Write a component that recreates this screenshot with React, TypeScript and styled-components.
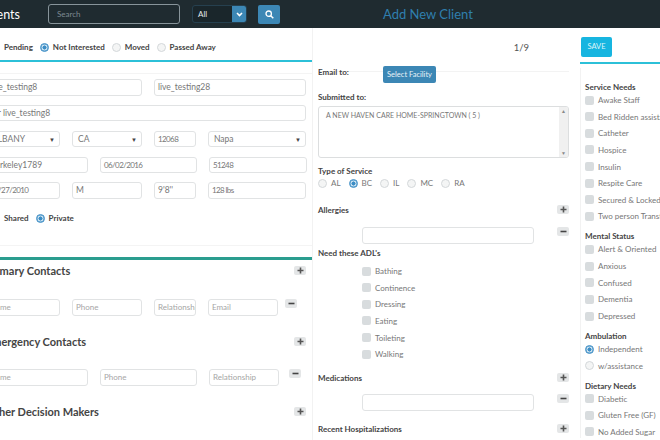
import React from 'react';
import styled, { createGlobalStyle } from 'styled-components';

const GlobalStyle = createGlobalStyle`
	html, body {
		margin: 0;
		padding: 0;
		width: 660px;
		height: 440px;
		overflow: hidden;
		background: #fff;
		font-family: 'Lato', 'Noto Sans', sans-serif;
	}
	* { box-sizing: border-box; }
`;

const Page = styled.div`
	width: 660px;
	height: 440px;
	overflow: hidden;
`;

const Header = styled.header`
	height: 28px;
	background: #1f2b30;
	display: flex;
	align-items: center;
`;

const BrandClip = styled.div`
	width: 48px;
	padding-right: 28px;
	overflow: hidden;
	display: flex;
	justify-content: flex-end;
`;

const Brand = styled.div`
	flex: none;
	color: #fff;
	font-size: 12.5px;
	white-space: nowrap;
`;

const SearchInput = styled.div`
	width: 132px;
	height: 20px;
	border: 1px solid #87949a;
	border-radius: 3px;
	color: #7d8a90;
	font-size: 8px;
	line-height: 18px;
	padding-left: 8px;
`;

const FilterSelect = styled.div`
	width: 55px;
	height: 18px;
	margin-left: 12px;
	border: 1px solid #26404f;
	border-radius: 3px;
	background: #1a262b;
	color: #e6eaec;
	font-size: 8px;
	line-height: 16px;
	padding-left: 5px;
	display: flex;
	justify-content: space-between;
	overflow: hidden;
`;

const FilterArrow = styled.span`
	width: 14px;
	background: #3c87b5;
	display: flex;
	align-items: center;
	justify-content: center;
`;

const SearchButton = styled.div`
	width: 22px;
	height: 19px;
	margin-left: 11px;
	background: #3c87b5;
	border-radius: 2px;
	display: flex;
	align-items: center;
	justify-content: center;
`;

const Title = styled.div`
	margin-left: 103px;
	color: #2f7fae;
	font-size: 13px;
	white-space: nowrap;
`;

const Columns = styled.main`
	display: flex;
	height: 412px;
`;

const LeftColumn = styled.section`
	flex: none;
	width: 336px;
	margin-left: -24px;
	padding-top: 14px;
`;

const MiddleColumn = styled.section`
	flex: none;
	width: 268px;
	padding: 15px 11px 0 5px;
	border-left: 1px solid #f2f2f2;
`;

const RightColumn = styled.section`
	flex: none;
	width: 120px;
	padding-top: 9px;
`;

const RadioRow = styled.div<{ $top?: number; $left?: number }>`
	display: flex;
	align-items: center;
	gap: 4px;
	height: 10px;
	margin-top: ${p => p.$top ?? 0}px;
	padding-left: ${p => p.$left ?? 0}px;
	font-size: 8px;
	font-weight: 700;
	color: #444;
	white-space: nowrap;
`;

const RadioLabel = styled.span<{ $plain?: boolean }>`
	margin-right: 3px;
	${p => (p.$plain ? 'font-weight: 400; color: #777; margin-right: 4px;' : '')}
`;

const Radio = styled.span<{ $checked?: boolean }>`
	flex: none;
	width: 9px;
	height: 9px;
	border-radius: 50%;
	border: 1px solid ${p => (p.$checked ? '#3c8dc5' : '#d4d8da')};
	background: ${p => (p.$checked ? 'radial-gradient(circle, #3c8dc5 0 1.8px, #dcecf6 2.3px)' : '#f4f5f5')};
	box-shadow: ${p => (p.$checked ? 'inset 0 0 0 0.5px #3c8dc5' : 'none')};
`;

const Rule = styled.div<{ $color: string; $h?: number; $top?: number }>`
	height: ${p => p.$h ?? 2}px;
	margin-top: ${p => p.$top ?? 0}px;
	background: ${p => p.$color};
`;

const FieldRow = styled.div<{ $top?: number }>`
	display: flex;
	gap: 12px;
	margin-top: ${p => p.$top ?? 0}px;
	padding-left: 10px;
	align-items: flex-start;
`;

const Field = styled.div<{ $w: number; $h?: number; $hint?: boolean; $select?: boolean; $num?: boolean }>`
	flex: none;
	width: ${p => p.$w}px;
	height: ${p => p.$h ?? 17}px;
	border: 1px solid #e1e3e4;
	border-radius: 3px;
	background: #fff;
	padding: 0 ${p => (p.$select ? 2 : 3)}px 0 ${p => (p.$select ? 5 : 3)}px;
	color: ${p => (p.$hint ? '#a6a6a6' : '#777')};
	font-size: ${p => (p.$hint || p.$num ? 8 : 8.5)}px;
	letter-spacing: ${p => (p.$num ? -0.6 : 0)}px;
	line-height: 15px;
	white-space: nowrap;
	overflow: hidden;
	display: flex;
	justify-content: space-between;
`;

const Caret = styled.span`
	font-size: 6px;
	color: #444;
	margin-right: 2px;
`;

const SectionHead = styled.div<{ $top?: number }>`
	display: flex;
	justify-content: space-between;
	align-items: center;
	height: 12px;
	margin-top: ${p => p.$top ?? 0}px;
	padding-left: 10px;
	padding-right: 6px;
	font-size: 11px;
	font-weight: 700;
	color: #444;
	white-space: nowrap;
`;

const IconBtn = styled.span<{ $inset?: number; $raise?: number }>`
	flex: none;
	width: 12px;
	height: 9px;
	margin-left: ${p => p.$inset ?? 0}px;
	margin-top: ${p => -(p.$raise ?? 0)}px;
	background: #e4e6e7;
	border-radius: 2px;
	color: #555;
	display: flex;
	align-items: center;
	justify-content: center;
`;

const PagerRow = styled.div`
	height: 18px;
	text-align: right;
	padding-right: 40px;
	color: #555;
	font-size: 9.5px;
	line-height: 10px;
`;

const EmailRow = styled.div`
	display: flex;
	align-items: flex-start;
	height: 17px;
	margin-top: 5px;
	background: linear-gradient(#f3f3f3, #f3f3f3) 0 5px / 100% 1px no-repeat;
`;

const MidLabel = styled.div<{ $top?: number; $w?: number }>`
	margin-top: ${p => p.$top ?? 0}px;
	width: ${p => (p.$w ? `${p.$w}px` : 'auto')};
	flex: none;
	font-size: 8px;
	font-weight: 700;
	line-height: 11px;
	color: #444;
	white-space: nowrap;
`;

const FacilityButton = styled.div`
	width: 53px;
	height: 17px;
	background: #3c87b5;
	border-radius: 2px;
	color: #e8f2f8;
	font-size: 7.5px;
	line-height: 17px;
	text-align: center;
	white-space: nowrap;
`;

const TextBox = styled.div`
	margin-top: 3px;
	height: 52px;
	border: 1px solid #dcdedf;
	border-radius: 3px;
	display: flex;
	justify-content: space-between;
	padding-left: 7px;
	font-size: 7px;
	line-height: 16px;
	color: #777;
	white-space: nowrap;
	overflow: hidden;
`;

const ScrollTrack = styled.span`
	width: 9px;
	background: #f0f0f0;
	color: #888;
	font-size: 5px;
	line-height: 8px;
	text-align: center;
	display: flex;
	flex-direction: column;
	justify-content: space-between;
`;

const MidHead = styled.div<{ $top?: number }>`
	display: flex;
	justify-content: space-between;
	align-items: center;
	height: 10px;
	margin-top: ${p => p.$top ?? 0}px;
	font-size: 8px;
	font-weight: 700;
	color: #444;
	white-space: nowrap;
`;

const EntryRow = styled.div<{ $top?: number }>`
	display: flex;
	justify-content: space-between;
	align-items: flex-start;
	height: 17px;
	margin-top: ${p => p.$top ?? 0}px;
	padding-left: 44px;
`;

const EntryInput = styled.div`
	width: 172px;
	height: 17px;
	border: 1px solid #e1e3e4;
	border-radius: 3px;
`;

const CheckList = styled.div<{ $left?: number; $top?: number }>`
	display: flex;
	flex-direction: column;
	gap: 6.65px;
	padding-left: ${p => p.$left ?? 0}px;
	margin-top: ${p => p.$top ?? 0}px;
`;

const CheckRow = styled.div`
	display: flex;
	align-items: center;
	gap: 4px;
	height: 10px;
	font-size: 8px;
	color: #777;
	white-space: nowrap;
`;

const Check = styled.span`
	flex: none;
	width: 9px;
	height: 9px;
	border-radius: 2px;
	background: #d8dcde;
`;

const SaveButton = styled.div`
	width: 31px;
	height: 20px;
	margin-left: 1px;
	background: #17b5e0;
	border-radius: 2px;
	color: #dff5fb;
	font-size: 7.5px;
	line-height: 20px;
	text-align: center;
`;

const NeedsPanel = styled.div`
	margin-top: 4px;
	padding: 15px 0 0 4px;
	border-left: 1px solid #f2f2f2;
	height: 370px;
`;

const NeedsHead = styled.div<{ $top?: number }>`
	height: 9px;
	line-height: 9px;
	margin-top: ${p => p.$top ?? 0}px;
	margin-bottom: 3px;
	font-size: 8px;
	font-weight: 700;
	color: #444;
	white-space: nowrap;
`;

const Plus = () => (
	<svg width="7" height="7" viewBox="0 0 7 7">
		<path d="M3.5 .5v6M.5 3.5h6" stroke="#555" strokeWidth="1.6" />
	</svg>
);

const Minus = () => (
	<svg width="7" height="7" viewBox="0 0 7 7">
		<path d="M.5 3.5h6" stroke="#444" strokeWidth="1.6" />
	</svg>
);

const options = (items: string[]) =>
	items.map(item => (
		<CheckRow key={item}>
			<Check />
			{item}
		</CheckRow>
	));

export default function App() {
	return (
		<Page>
			<GlobalStyle />
			<Header>
				<BrandClip><Brand>Clients</Brand></BrandClip>
				<SearchInput>Search</SearchInput>
				<FilterSelect>
					All
					<FilterArrow>
						<svg width="7" height="5" viewBox="0 0 7 5">
							<path d="M1 1l2.5 2.5L6 1" fill="none" stroke="#fff" strokeWidth="1.6" />
						</svg>
					</FilterArrow>
				</FilterSelect>
				<SearchButton>
					<svg width="9" height="9" viewBox="0 0 9 9">
						<circle cx="3.7" cy="3.7" r="2.7" fill="none" stroke="#fff" strokeWidth="1.3" />
						<path d="M5.7 5.7L8.3 8.3" stroke="#fff" strokeWidth="1.5" />
					</svg>
				</SearchButton>
				<Title>Add New Client</Title>
			</Header>
			<Columns>
				<LeftColumn>
					<RadioRow $left={15}>
						<Radio />
						<RadioLabel>Pending</RadioLabel>
						<Radio $checked />
						<RadioLabel>Not Interested</RadioLabel>
						<Radio />
						<RadioLabel>Moved</RadioLabel>
						<Radio />
						<RadioLabel>Passed Away</RadioLabel>
					</RadioRow>
					<Rule $color="#2cc0d8" $h={2} $top={8} />
					<Rule $color="#f4f4f4" $h={1} $top={11} />
					<FieldRow $top={5}>
						<Field $w={156}>live_testing8</Field>
						<Field $w={152}>live_testing28</Field>
					</FieldRow>
					<FieldRow $top={9}>
						<Field $w={320} $h={16}>Mr live_testing8</Field>
					</FieldRow>
					<FieldRow $top={10}>
						<Field $w={74} $h={16} $select>ALBANY<Caret>▼</Caret></Field>
						<Field $w={70} $h={16} $select>CA<Caret>▼</Caret></Field>
						<Field $w={42} $h={16} $num>12068</Field>
						<Field $w={98} $h={16} $select>Napa<Caret>▼</Caret></Field>
					</FieldRow>
					<FieldRow $top={10}>
						<Field $w={102} $h={16}>Berkeley1789</Field>
						<Field $w={97} $h={16} $num>06/02/2016</Field>
						<Field $w={98} $h={16} $num>51248</Field>
					</FieldRow>
					<FieldRow $top={9}>
						<Field $w={74} $num>02/27/2010</Field>
						<Field $w={70}>M</Field>
						<Field $w={42}>9'8''</Field>
						<Field $w={98} $num>128 lbs</Field>
					</FieldRow>
					<RadioRow $top={14} $left={15}>
						<Radio />
						<RadioLabel>Shared</RadioLabel>
						<Radio $checked />
						<RadioLabel>Private</RadioLabel>
					</RadioRow>
					<Rule $color="#f4f4f4" $h={1} $top={22} />
					<Rule $color="#2a9d8f" $h={3} $top={11} />
					<SectionHead $top={4}>
						<span>Primary Contacts</span>
						<IconBtn><Plus /></IconBtn>
					</SectionHead>
					<FieldRow $top={23}>
						<Field $w={74} $hint>Name</Field>
						<Field $w={70} $hint>Phone</Field>
						<Field $w={42} $hint>Relationship</Field>
						<Field $w={70} $hint>Email</Field>
						<IconBtn $inset={-5}><Minus /></IconBtn>
					</FieldRow>
					<SectionHead $top={19}>
						<span>Emergency Contacts</span>
						<IconBtn><Plus /></IconBtn>
					</SectionHead>
					<FieldRow $top={22}>
						<Field $w={102} $hint>Name</Field>
						<Field $w={97} $hint>Phone</Field>
						<Field $w={70} $hint>Relationship</Field>
						<IconBtn $inset={-2}><Minus /></IconBtn>
					</FieldRow>
					<SectionHead $top={19}>
						<span>Other Decision Makers</span>
						<IconBtn><Plus /></IconBtn>
					</SectionHead>
				</LeftColumn>
				<MiddleColumn>
					<PagerRow>1/9</PagerRow>
					<EmailRow>
						<MidLabel $top={1} $w={65}>Email to:</MidLabel>
						<FacilityButton>Select Facility</FacilityButton>
					</EmailRow>
					<MidLabel $top={9}>Submitted to:</MidLabel>
					<TextBox>
						A NEW HAVEN CARE HOME-SPRINGTOWN ( 5 )
						<ScrollTrack><span>▲</span><span>▼</span></ScrollTrack>
					</TextBox>
					<MidLabel $top={8}>Type of Service</MidLabel>
					<RadioRow $top={1}>
						<Radio />
						<RadioLabel $plain>AL</RadioLabel>
						<Radio $checked />
						<RadioLabel $plain>BC</RadioLabel>
						<Radio />
						<RadioLabel $plain>IL</RadioLabel>
						<Radio />
						<RadioLabel $plain>MC</RadioLabel>
						<Radio />
						<RadioLabel $plain>RA</RadioLabel>
					</RadioRow>
					<MidHead $top={17}>
						Allergies
						<IconBtn $raise={2}><Plus /></IconBtn>
					</MidHead>
					<EntryRow $top={12}>
						<EntryInput />
						<IconBtn><Minus /></IconBtn>
					</EntryRow>
					<MidHead $top={4}>Need these ADL's</MidHead>
					<CheckList $left={44} $top={8}>
						{options(['Bathing', 'Continence', 'Dressing', 'Eating', 'Toileting', 'Walking'])}
					</CheckList>
					<MidHead $top={14}>
						Medications
						<IconBtn $raise={2}><Plus /></IconBtn>
					</MidHead>
					<EntryRow $top={11}>
						<EntryInput />
						<IconBtn><Minus /></IconBtn>
					</EntryRow>
					<MidHead $top={13}>
						Recent Hospitalizations
						<IconBtn $raise={2}><Plus /></IconBtn>
					</MidHead>
				</MiddleColumn>
				<RightColumn>
					<SaveButton>SAVE</SaveButton>
					<Rule $color="#2cc0d8" $h={2} $top={5} />
					<NeedsPanel>
						<NeedsHead>Service Needs</NeedsHead>
						<CheckList>
							{options(['Awake Staff', 'Bed Ridden assistance', 'Catheter', 'Hospice', 'Insulin', 'Respite Care', 'Secured & Locked', 'Two person Transfer'])}
						</CheckList>
						<NeedsHead $top={11}>Mental Status</NeedsHead>
						<CheckList>
							{options(['Alert & Oriented', 'Anxious', 'Confused', 'Dementia', 'Depressed'])}
						</CheckList>
						<NeedsHead $top={11}>Ambulation</NeedsHead>
						<CheckList>
							<CheckRow><Radio $checked />Independent</CheckRow>
							<CheckRow><Radio />w/assistance</CheckRow>
						</CheckList>
						<NeedsHead $top={11}>Dietary Needs</NeedsHead>
						<CheckList>
							{options(['Diabetic', 'Gluten Free (GF)', 'No Added Sugar'])}
						</CheckList>
					</NeedsPanel>
				</RightColumn>
			</Columns>
		</Page>
	);
}
